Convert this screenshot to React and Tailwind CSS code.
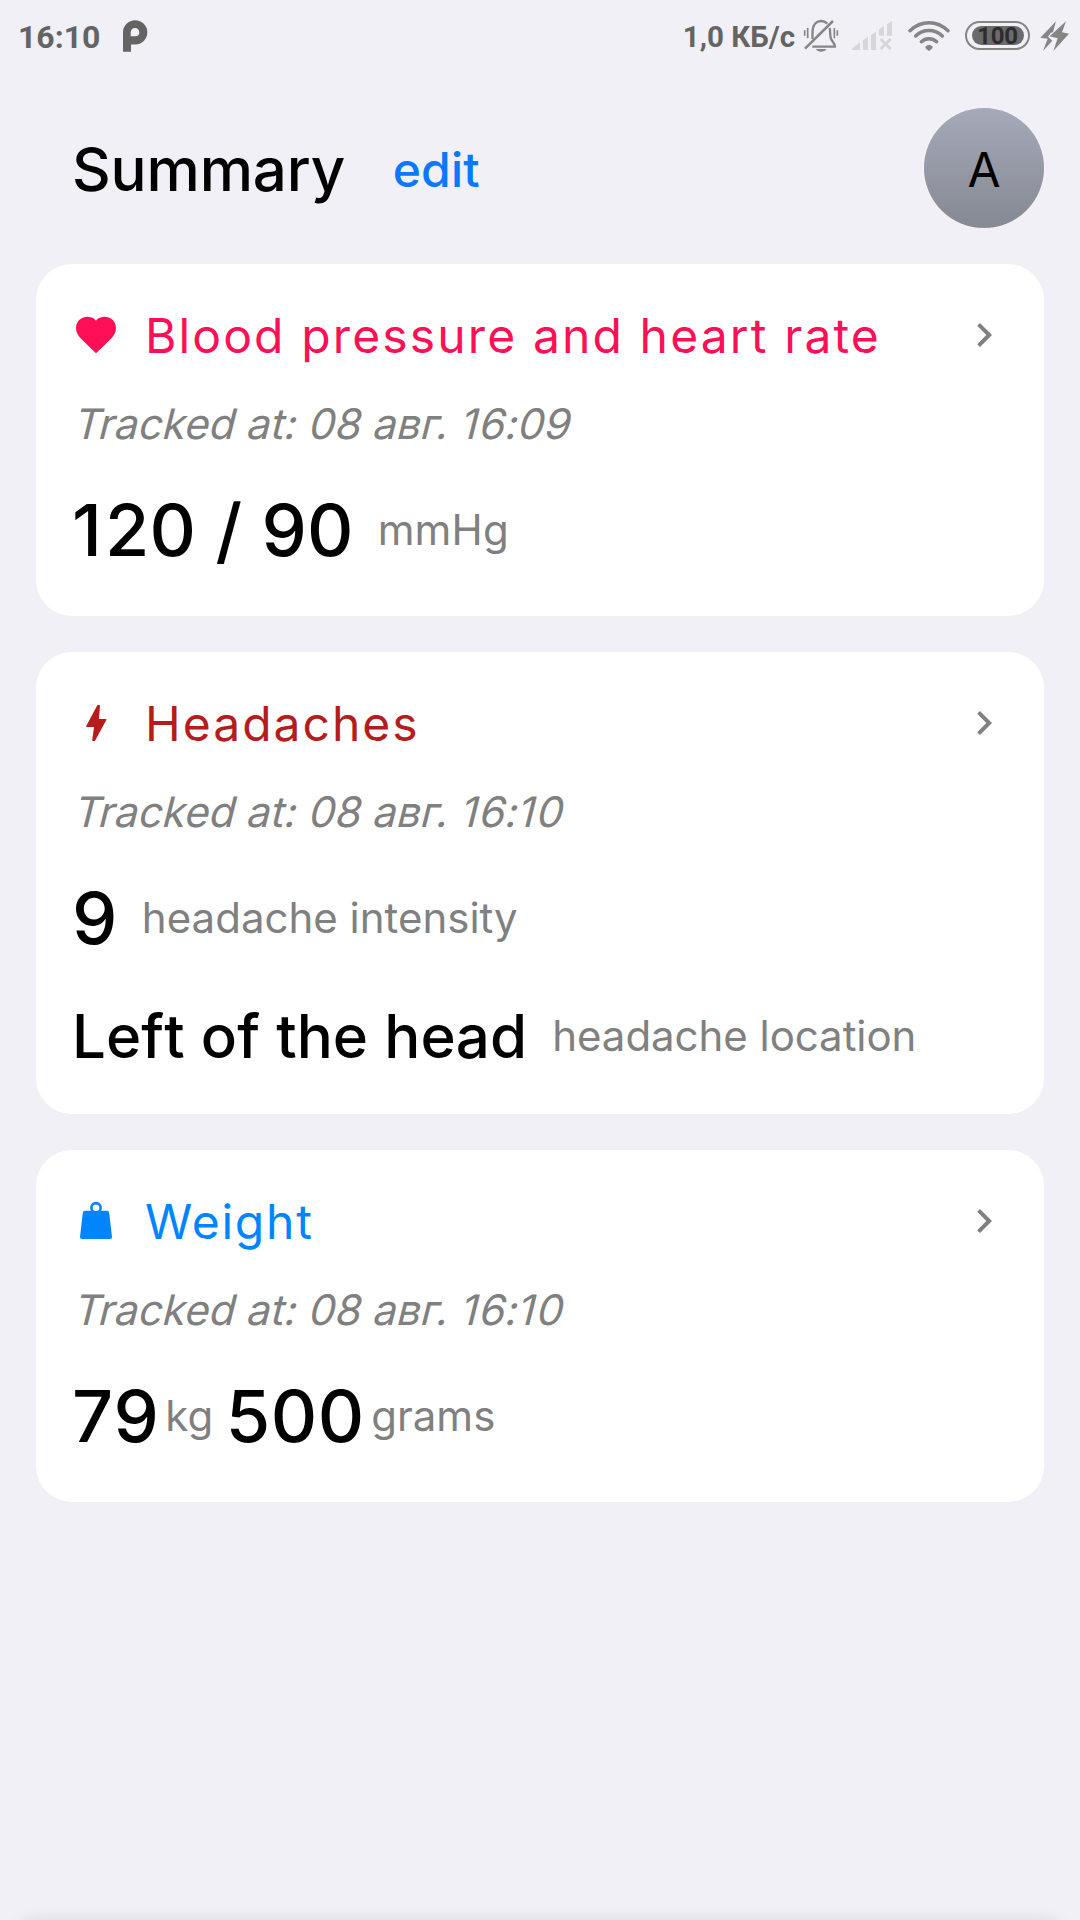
function PLogo() {
  return (
    <svg className="h-[44px] w-[27px]" viewBox="367 45 81 132" fill="#646465">
      <path fillRule="evenodd" d="M370 155V97a36.500 36.500 0 1 1 36.500 36.500H394V155ZM393 109V97a13 13 0 0 1 26 0 12 12 0 0 1 -12 12Z" />
    </svg>
  );
}

function BellOff() {
  return (
    <svg className="h-[44px] w-[36px]" viewBox="399 45 108 132" fill="none" stroke="#868687" strokeWidth="7">
      <path d="M427 117C428 111 427 99 428 90C430 73 440 63 453 63C461 63 467 66 472 71" />
      <path d="M479 84C481 92 480 104 482 113C484 124 495 128 495 140H427" strokeLinejoin="round" />
      <path d="M489 63L405 146" strokeWidth="7.500" />
      <path d="M404 91V107M413 84V115M493 84V115M502 91V107" strokeWidth="5" />
      <path d="M438 147H469C466 158 441 158 438 147Z" fill="#868687" stroke="none" />
    </svg>
  );
}

function NoSignal() {
  return (
    <svg className="h-[44px] w-[44px]" viewBox="540 45 132 132" fill="#d6d6da">
      <path d="M549 150C545 150 545 146 548 144L570 127V150Z" />
      <path d="M579 120L594 111V150H579Z" />
      <path d="M603 105L618 95V150H603Z" />
      <path d="M627 88L642 79V107H627Z" />
      <path d="M651 73L666 63V107H651Z" />
      <path d="M632 117L662 147M662 117L632 147" stroke="#d6d6da" strokeWidth="9" />
    </svg>
  );
}

function Wifi() {
  return (
    <svg className="h-[44px] w-[44px]" viewBox="711 45 132 132" fill="none" stroke="#858586" strokeWidth="10.500" strokeLinecap="round">
      <path d="M720 92C753 60 801 60 834 92" />
      <path d="M737 108C760 86 794 86 817 108" />
      <path d="M754 125C767 113 787 113 800 125" />
      <path d="M766 140C772 133 782 133 788 140C789 145 782 149 777 153C772 149 765 145 766 140Z" fill="#858586" stroke="none" />
    </svg>
  );
}

function Battery() {
  return (
    <div className="mb-[3px] flex h-[29px] w-[65px] items-center justify-center rounded-full border-2 border-[#858586]">
      <div className="flex h-[19px] w-[52px] items-center justify-center rounded-full bg-[#6b6b6c] text-[24px] leading-none font-bold tracking-[-0.3px] text-[#2d2d2e]">
        100
      </div>
    </div>
  );
}

function Charging() {
  return (
    <svg className="h-[44px] w-[33px]" viewBox="1107 45 99 132" fill="#858586">
      <path d="M1158 64L1111 113L1133 116L1119 153L1147 122L1134 110L1142 99L1149 96Z" />
      <path d="M1188 64L1139 109L1163 115L1150 153L1197 101L1176 97Z" />
    </svg>
  );
}

function Heart() {
  return (
    <svg className="size-[48px]" viewBox="0 0 144 144" fill="#ff0f55">
      <path d="M72 29C66 20 56 17 46 17C26 17 12 32 12 51C12 65 19 75 27 83L72 127L117 83C125 75 132 65 132 51C132 32 118 17 98 17C88 17 78 20 72 29Z" />
    </svg>
  );
}

function Bolt() {
  return (
    <svg className="size-[48px]" viewBox="0 0 48 48" fill="#b71c1c">
      <path d="M25.200 6.600Q25.600 6 26.300 6H27.500Q28.100 6 28 6.700L26.900 20H33.700Q34.900 20 34.300 21.100L23.200 41.400Q22.900 42 22.300 42H20.800Q20.100 42 20.200 41.300L22 28H14.900Q13.700 28 14.200 26.900Z" />
    </svg>
  );
}

function Kettlebell() {
  return (
    <svg className="size-[48px]" viewBox="0 0 48 48" fill="#0085ff">
      <path d="M13.200 13.700H34.800Q37 13.700 37.200 15.700L40 39.900Q40.200 42 38 42H10Q7.800 42 8 39.900L10.800 15.700Q11 13.700 13.200 13.700Z" />
      <circle cx="24" cy="10.700" r="4.600" fill="#fff" stroke="#0085ff" strokeWidth="2.600" />
    </svg>
  );
}

function Chevron() {
  return (
    <svg className="size-[48px]" viewBox="0 0 24 24" fill="#808080">
      <path d="M10 6L8.590 7.410L13.170 12L8.590 16.590L10 18L16 12Z" />
    </svg>
  );
}

function Card({ icon, title, titleClass, hour, minuteTens, minuteOnes, children }) {
  return (
    <section className="flex flex-col rounded-[36px] bg-white p-9">
      <div className="flex h-[72px] items-center">
        <div className="mb-[2px]">{icon}</div>
        <h2 className={"ml-[25px] flex-1 text-[48px] leading-[58px] " + titleClass}>{title}</h2>
        <div className="mb-[2px]"><Chevron /></div>
      </div>
      <p className="mt-[26px] h-[52px] origin-[0_41px] -skew-x-[14deg] text-[42px] leading-[52px] tracking-[0.1px] text-[#808080]">
        Tracked at: 08 авг. <span className="tracking-[1.5px]">{hour[0]}</span>{hour[1]}:
        <span className={minuteTens === "1" ? "tracking-[1.8px]" : ""}>{minuteTens}</span>{minuteOnes}
      </p>
      <div className="mt-[30px] flex flex-col gap-[26px]">{children}</div>
    </section>
  );
}

const value = "text-[72px] leading-[87px] font-medium text-black";
const unit = "text-[42px] leading-[51px] text-[#808080]";

export default function App() {
  return (
    <div className="relative h-[1920px] w-[1080px] overflow-hidden bg-[#f1f0f6] font-['Inter',sans-serif]">
      <div className="flex h-[74px] items-center pr-[8px] pl-[18px] font-['Roboto',sans-serif] font-bold text-[#646465]">
        <span className="w-[81px] text-[32px] leading-[38px] whitespace-nowrap">16:10</span>
        <div className="ml-[23px]"><PLogo /></div>
        <span className="mr-[8px] ml-auto text-[29.5px] leading-[35px]">1,0 КБ/с</span>
        <BellOff />
        <div className="ml-[11px]"><NoSignal /></div>
        <div className="mr-[14px] ml-[13px]"><Wifi /></div>
        <Battery />
        <div className="ml-[9px]"><Charging /></div>
      </div>
      <header className="flex h-[190px] items-start pt-[34px] pr-9 pl-[72px]">
        <div className="flex h-[123px] flex-1 items-center gap-[47.5px]">
          <h1 className="text-[60px] leading-[73px] font-medium tracking-[-0.15px] text-black">Summary</h1>
          <span className="pt-[1px] text-[48px] leading-[58px] font-medium tracking-[0.2px] text-[#0a78ff]">edit</span>
        </div>
        <div className="flex size-[120px] items-center justify-center rounded-full bg-linear-to-b from-[#a6a9b9] to-[#858992] pt-[4px] text-[48px] leading-[58px] text-black">
          A
        </div>
      </header>
      <main className="flex flex-col gap-9 px-9">
        <Card icon={<Heart />} title="Blood pressure and heart rate" titleClass="tracking-[2.13px] text-[#ff0f55]" hour="16" minuteTens="0" minuteOnes="9">
          <div className="flex h-[100px] items-start pt-[6px]">
            <span className={value + " tracking-[0.15px]"}><span className="tracking-[3px]">1</span>20 / 90</span>
            <span className={unit + " mt-[18px] ml-[24px] tracking-[0.2px]"}>mmHg</span>
          </div>
        </Card>
        <Card icon={<Bolt />} title="Headaches" titleClass="tracking-[2.02px] text-[#b71c1c]" hour="16" minuteTens="1" minuteOnes="0">
          <div className="flex h-[100px] items-start pt-[6px]">
            <span className={value}>9</span>
            <span className={unit + " mt-[18px] ml-[24.5px]"}>headache intensity</span>
          </div>
          <div className="flex h-[84px] items-start gap-[25px] pt-[6px]">
            <span className="text-[60px] leading-[73px] font-medium tracking-[0.1px] text-black [font-kerning:none]">Left of the head</span>
            <span className={unit + " mt-[10px] tracking-[-0.05px]"}>headache location</span>
          </div>
        </Card>
        <Card icon={<Kettlebell />} title="Weight" titleClass="tracking-[1.8px] text-[#0085ff]" hour="16" minuteTens="1" minuteOnes="0">
          <div className="flex h-[100px] items-start pt-[6px]">
            <span className={value + " tracking-[1px]"}>79</span>
            <span className={unit + " mt-[18px] ml-[5.5px]"}>kg</span>
            <span className={value + " ml-[12.5px] tracking-[0.6px]"}>500</span>
            <span className={unit + " mt-[18px] ml-[6.3px]"}>grams</span>
          </div>
        </Card>
      </main>
      <div className="absolute inset-x-[16px] top-full h-20 rounded-[20px] shadow-[0_0_16px_rgba(0,0,0,0.1)]" />
    </div>
  );
}
